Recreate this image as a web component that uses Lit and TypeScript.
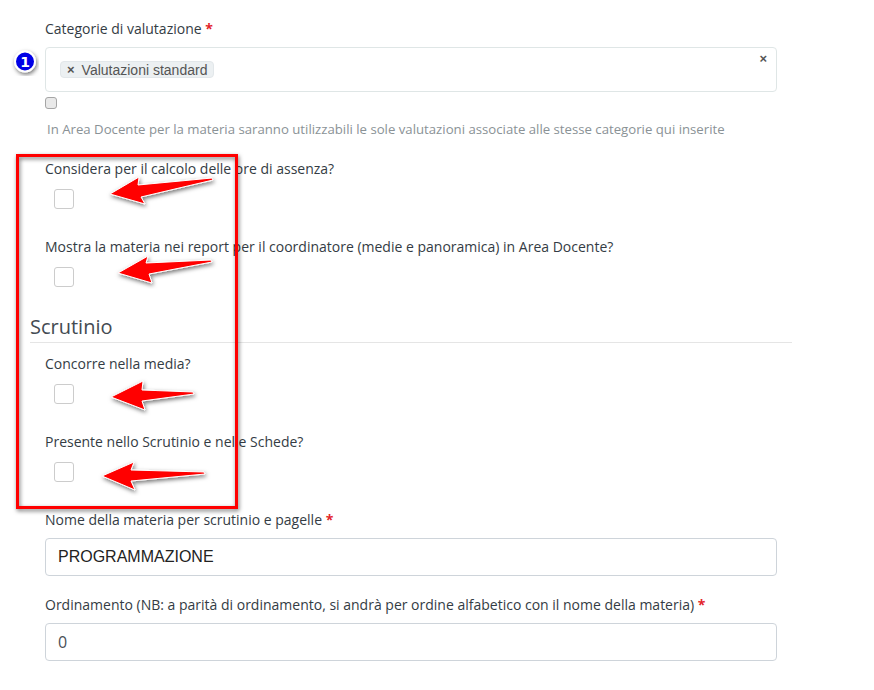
import { LitElement, html, css, svg } from "lit";
import { customElement } from "lit/decorators.js";

const ARROWS = [
  "110,194 139,177 138,185 212,178 213,180 141,197 145,204",
  "118,273 148,256 146,263 211,260 212,262 149,274 152,283",
  "111,397 143,381 142,390 193,392 194,394 142,401 145,410",
  "102,476 134,462 131,470 204,472 205,474 131,481 135,490",
];

@customElement("app-root")
export class AppRoot extends LitElement {
  static styles = css`
    :host { display: block; position: relative; width: 874px; height: 690px; overflow: hidden; background: #fff;
      font-family: "Open Sans", sans-serif; font-size: 14px; color: #343c44; }
    .page { padding: 19px 0 0 30px; width: 792px; box-sizing: border-box; }
    .form { margin-left: 15px; width: 732px; }
    label { display: block; line-height: 20px; height: 20px; }
    .req { color: #e3242b; font-weight: 700; }
    .select { margin-top: 8px; height: 45px; box-sizing: border-box; border: 1px solid #dfe6e6; border-radius: 4px; padding: 13px 14px 0; position: relative; }
    .tag { display: flex; width: fit-content; align-items: center; height: 17px; box-sizing: border-box; padding: 0 6px; gap: 7px; background: #ecf0f2; border: 1px solid #e2e7ea; border-radius: 4px;
      font-family: "Liberation Sans", sans-serif; font-size: 14px; color: #555; }
    .x { font-weight: 700; font-size: 13px; color: #555; font-family: "Liberation Sans", sans-serif; }
    .clear { position: absolute; right: 9px; top: 3px; line-height: 16px; }
    .tiny { display: block; width: 12px; height: 12px; box-sizing: border-box; margin-top: 5px; background: #e9e9e9; border: 1px solid #a5a5a5; border-radius: 3px; }
    .help { margin: 10px 0 0 2px; font-size: 13.2px; line-height: 20px; height: 20px; color: #8a9296; }
    .check { display: block; width: 20px; height: 20px; box-sizing: border-box; margin: 10px 0 0 9px; background: #fff; border: 1px solid #ccc; border-radius: 3px; }
    .g1 { margin-top: 20px; }
    .g2 { margin-top: 28px; }
    .head { margin-top: 26px; font-size: 20px; line-height: 28px; height: 30px; box-sizing: border-box; border-bottom: 1px solid #e5e5e5; color: #444b52; }
    .g3 { margin-top: 11px; }
    .g4 { margin-top: 28px; }
    .g5 { margin-top: 28px; }
    .input { margin-top: 8px; height: 38px; box-sizing: border-box; border: 1px solid #ced4da; border-radius: 4px; padding: 0 12px; line-height: 36px; font-size: 16px; color: #495057; }
    .strong { font-family: "Liberation Sans", sans-serif; color: #222; }
    .g6 { margin-top: 19px; }
    .overlay { position: absolute; left: 0; top: 0; width: 874px; height: 690px; pointer-events: none; }
    .badge { font: 700 14px "DejaVu Sans", sans-serif; fill: #fff; }
  `;

  render() {
    return html`
      <div class="page">
        <div class="form">
          <label>Categorie di valutazione <span class="req">*</span></label>
          <div class="select">
            <span class="tag"><span class="x">×</span>Valutazioni standard</span>
            <span class="x clear">×</span>
          </div>
          <span class="tiny"></span>
          <div class="help">In Area Docente per la materia saranno utilizzabili le sole valutazioni associate alle stesse categorie qui inserite</div>
          <label class="g1">Considera per il calcolo delle ore di assenza?</label>
          <span class="check"></span>
          <label class="g2">Mostra la materia nei report per il coordinatore (medie e panoramica) in Area Docente?</label>
          <span class="check"></span>
        </div>
        <div class="head">Scrutinio</div>
        <div class="form">
          <label class="g3">Concorre nella media?</label>
          <span class="check"></span>
          <label class="g4">Presente nello Scrutinio e nelle Schede?</label>
          <span class="check"></span>
          <label class="g5">Nome della materia per scrutinio e pagelle <span class="req">*</span></label>
          <div class="input strong">PROGRAMMAZIONE</div>
          <label class="g6">Ordinamento (NB: a parità di ordinamento, si andrà per ordine alfabetico con il nome della materia) <span class="req">*</span></label>
          <div class="input">0</div>
        </div>
      </div>
      <svg class="overlay" viewBox="0 0 874 690">
        <defs>
          <filter id="sh" x="-20%" y="-20%" width="140%" height="140%">
            <feDropShadow dx="1" dy="2" stdDeviation="2" flood-color="#000" flood-opacity="0.55"></feDropShadow>
          </filter>
        </defs>
        <rect x="17.5" y="155.5" width="219" height="352" fill="none" stroke="#f00" stroke-width="3" filter="url(#sh)"></rect>
        ${ARROWS.map((p) => svg`<polygon points=${p} fill="#f00" stroke="#fff" stroke-width="1" filter="url(#sh)"></polygon>`)}
        <circle cx="25" cy="61.5" r="10" fill="#0000e6" stroke="#fff" stroke-width="2" filter="url(#sh)"></circle>
        <text class="badge" x="25" y="66.5" text-anchor="middle">1</text>
      </svg>
    `;
  }
}
